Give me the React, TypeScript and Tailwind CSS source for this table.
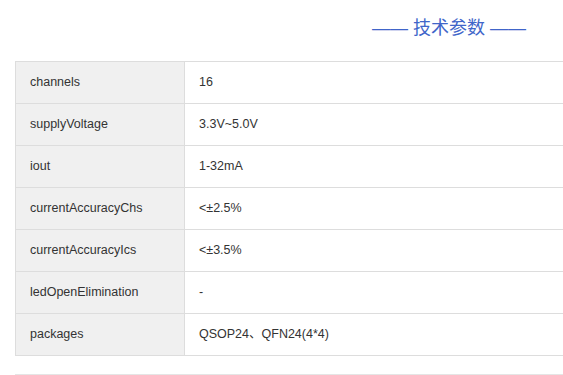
import React from 'react';

const params: [string, string][] = [
  ['channels', '16'],
  ['supplyVoltage', '3.3V~5.0V'],
  ['iout', '1-32mA'],
  ['currentAccuracyChs', '<±2.5%'],
  ['currentAccuracyIcs', '<±3.5%'],
  ['ledOpenElimination', '-'],
  ['packages', 'QSOP24、QFN24(4*4)'],
];

export default function App() {
  return (
    <div className="w-[563px] h-[375px] overflow-hidden bg-white font-['Liberation_Sans','Noto_Sans_CJK_SC',sans-serif]">
      <div className="w-[868px] ml-[15px]">
        <div className="h-[56px] flex items-center justify-center text-[18px] text-[#4065c9]">
          —— 技术参数 ——
        </div>
        <table className="mt-[5px] w-full border-collapse text-[12.5px] leading-none text-[#333]">
          <tbody>
            {params.map(([k, v]) => (
              <tr key={k} className="h-[42px]">
                <td className="w-[169px] border border-[#dddddd] bg-[#f0f0f0] px-[14px] pb-px align-middle">{k}</td>
                <td className="border border-[#dddddd] px-[14px] pb-px align-middle">{v}</td>
              </tr>
            ))}
          </tbody>
        </table>
        <div className="mt-[18px] border-t border-[#e5e5e5]" />
      </div>
    </div>
  );
}
